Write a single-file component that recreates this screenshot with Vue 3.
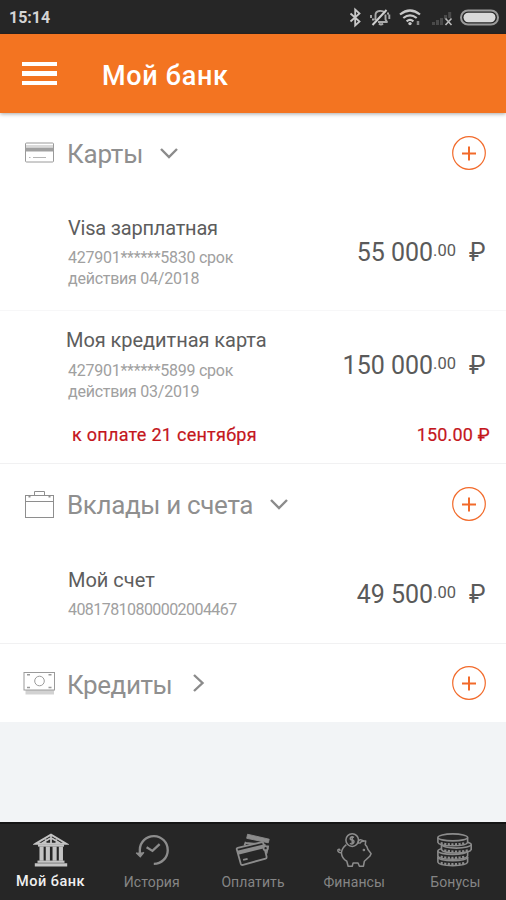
<script setup>
const cards = [
  { title: 'Visa зарплатная', lines: ['427901******5830 срок', 'действия 04/2018'], sum: '55 000', kind: 'visa' },
  { title: 'Моя кредитная карта', lines: ['427901******5899 срок', 'действия 03/2019'], sum: '150 000', kind: 'credit' },
]
</script>

<template>
  <div class="screen">
    <div class="status">
      <span class="time">15:14</span>
      <svg class="status-icons" width="156" height="24" viewBox="346 5 156 24" fill="none">
        <path d="M350.500 13.500l9 8-4.300 4v-16l4.300 4-9 8" stroke="#c9c9c9" stroke-width="1.800" />
        <g stroke="#aaa" stroke-width="1.900" stroke-linejoin="round">
          <path d="M375.500 20v-5q0-3.500 4-4 3.500-.5 5.500 2M385.500 14.500v5l1.500 2.500h-9M379 23.500q2 2 4 0" />
          <path d="M371 15v3M372 19.500h2.500M389.300 14.500v4.500M387 13.500h2" />
          <path d="M372.500 25L386.500 10" stroke="#d0d0d0" stroke-width="2" />
        </g>
        <g stroke="#c8c8c8" stroke-width="2.200">
          <path d="M400 14.500q10-8 20 0M403.300 18q6.700-5.400 13.400 0M406.600 21.300q3.400-2.700 6.800 0" />
        </g>
        <circle cx="410" cy="23.600" r="1.700" fill="#c8c8c8" />
        <path d="M418 21v4" stroke="#888" stroke-width="2.500" />
        <path d="M433.500 25v-3M437.500 25v-5M441.500 25v-7M445.500 19v-4M449.700 18v-6" stroke="#4a4a4a" stroke-width="3" />
        <path d="M445.500 18.500l6 6.500M451.500 18.500l-6 6.500" stroke="#bbb" stroke-width="1.600" />
        <rect x="461" y="10.500" width="37" height="14" rx="7" stroke="#999" stroke-width="2" />
        <rect x="463.500" y="12.700" width="32" height="9.600" rx="4.800" fill="#d8d8d8" />
      </svg>
    </div>

    <header class="bar">
      <div class="burger"><i></i><i></i><i></i></div>
      <h1>Мой банк</h1>
    </header>

    <main>
      <section class="group">
        <div class="head">
          <svg class="ico" width="34" height="34" viewBox="0 0 34 34" fill="none" stroke="#9a9a9a">
            <rect x="3.500" y="7" width="28" height="19" rx="1" />
            <path d="M3.500 13.500h28" stroke-width="4" stroke="#a0a0a0" />
            <path d="M4 10h27M7 21.500h1.500M11 21.500h13" stroke="#b5b5b5" />
          </svg>
          <h2 class="t-cards">Карты</h2>
          <svg class="chev" width="20" height="20" viewBox="0 0 20 20"><path d="M2 6l8 8 8-8" /></svg>
          <button class="add"><svg width="36" height="36" viewBox="0 0 36 36"><circle cx="18" cy="18" r="16.300" /><path d="M11 18.500h14M18 11.500v14" /></svg></button>
        </div>

        <article v-for="c in cards" :key="c.title" class="item" :class="c.kind">
          <div class="row">
            <div class="info">
              <h3>{{ c.title }}</h3>
              <p v-for="l in c.lines" :key="l">{{ l }}</p>
            </div>
            <div class="sum">{{ c.sum }}<sup>.00</sup><b>₽</b></div>
          </div>
          <div v-if="c.kind === 'credit'" class="due">
            <span class="due-date">к оплате 21 сентября</span>
            <span class="due-sum">150.00 ₽</span>
          </div>
        </article>
      </section>

      <section class="group">
        <div class="head">
          <svg class="ico" width="34" height="34" viewBox="0 0 34 34" fill="none" stroke="#8e8e8e">
            <rect x="3.500" y="8.500" width="28" height="22" />
            <path d="M12.500 8V4.500h10V8M3.500 14.500h28" />
            <path d="M7.500 8v2.500M27.500 8v2.500" stroke-width="2" />
          </svg>
          <h2 class="t-dep">Вклады и счета</h2>
          <svg class="chev" width="20" height="20" viewBox="0 0 20 20"><path d="M2 6l8 8 8-8" /></svg>
          <button class="add"><svg width="36" height="36" viewBox="0 0 36 36"><circle cx="18" cy="18" r="16.300" /><path d="M11 18.500h14M18 11.500v14" /></svg></button>
        </div>
        <article class="item account">
          <div class="row">
            <div class="info">
              <h3>Мой счет</h3>
              <p>40817810800002004467</p>
            </div>
            <div class="sum">49 500<sup>.00</sup><b>₽</b></div>
          </div>
        </article>
      </section>

      <section class="group">
        <div class="head head-last">
          <svg class="ico" width="34" height="34" viewBox="0 0 34 34" fill="none" stroke="#9a9a9a">
            <path d="M3.500 26h28.500" stroke="#d2d2d2" stroke-width="5" />
            <rect x="2" y="6.500" width="30.500" height="17.500" fill="#fff" />
            <circle cx="17.500" cy="15" r="4.800" />
            <path d="M5 8.800h3M26.500 8.800h3M5 21.500h3M26.500 21.500h3" stroke-width="1.500" />
          </svg>
          <h2 class="t-cred">Кредиты</h2>
          <svg class="chev" width="20" height="20" viewBox="0 0 20 20"><path d="M6 2l8.500 8L6 18" /></svg>
          <button class="add"><svg width="36" height="36" viewBox="0 0 36 36"><circle cx="18" cy="18" r="16.300" /><path d="M11 18.500h14M18 11.500v14" /></svg></button>
        </div>
      </section>
    </main>

    <nav class="tabs">
      <a class="tab active">
        <svg width="36" height="36" viewBox="0 0 40 40" fill="none" stroke="#c4c4c4">
          <path d="M3 13L20 3 37 13z" stroke-width="2.200" />
          <path d="M10 12.500L20 6.500l10 6M20 4v9M14 8v5M26 8v5" stroke-width="2" />
          <path d="M5.500 15h29" stroke-width="2.500" />
          <path d="M9.500 16v16M16.500 16v16M24 16v16M31 16v16" stroke-width="4.600" />
          <path d="M2 36.500h36" stroke-width="3.500" /><path d="M5 33h30" stroke-width="2.500" />
        </svg>
        <span>Мой банк</span>
      </a>
      <a class="tab">
        <svg width="36" height="36" viewBox="0 0 40 40" fill="none" stroke="#8c8c8c" stroke-width="2.600">
          <path d="M6.500 25V19.500A15.500 15.500 0 1 1 22 35.500" />
          <path d="M2.500 23l4.500 4.500 4-5" fill="#8c8c8c" stroke-width="1.500" />
          <path d="M14 17l6.500 4 8-7.500" />
        </svg>
        <span>История</span>
      </a>
      <a class="tab">
        <svg width="36" height="36" viewBox="0 0 40 40" fill="none" stroke="#8c8c8c" stroke-width="2">
          <path d="M14 2.500l24 5.500-1 4-24-5z" fill="#8c8c8c" stroke-width="1" />
          <path d="M12 11l-1.500 4M37 15l-2 9M12 12l22 2.500" />
          <path d="M2 19.500q-.5-1.500 1-2L29 11.500q2-.5 2.500 1L35 27q.5 2-1 2.500L9 36.500q-2 .5-2.500-1z" fill="#262626" />
          <path d="M3 23l29-7" stroke-width="4.500" />
          <path d="M9 31l5-1.200" />
          <circle cx="34" cy="18" r="2.300" fill="#262626" />
        </svg>
        <span>Оплатить</span>
      </a>
      <a class="tab">
        <svg width="36" height="36" viewBox="0 0 40 40" fill="none" stroke="#8c8c8c" stroke-width="1.700" stroke-linejoin="round">
          <circle cx="18" cy="9" r="7" />
          <path d="M20 6q-3-1.500-4 .5t2 2.500 1.500 3-4 .5M18 4.500v9" />
          <path d="M11.500 14Q6.500 18 6 23q.5 6.500 6 9.500L13.500 38h4.500l1-3.500h5.500l1.500 3.500h4.500l1-5.500 6-5.500L39 24l-3.500-4.500q-1-4-3-5.500l.5-4q-5-.5-7 3" />
          <path d="M25 13q-1-4 2-4.500l4 1.500M6 23q-4 0-4-3 2-2 2.500 1" />
          <circle cx="31" cy="20" r=".6" />
        </svg>
        <span>Финансы</span>
      </a>
      <a class="tab">
        <svg width="36" height="36" viewBox="0 0 40 40" fill="none" stroke="#8c8c8c" stroke-width="1.800">
          <g v-for="s in [[1, 31], [1, 24], [5, 17], [1, 9]]" :key="s[1]" :transform="`translate(${s[0]} ${s[1] - 3})`">
            <path d="M0 0v5.500q1 3.800 16.500 3.800T33 5.500V0" fill="#262626" />
            <ellipse cx="16.500" cy="0" rx="16.500" ry="3.900" fill="#262626" />
            <path d="M3 6.400q13.500 2.800 27 0" stroke-width="2.600" stroke-dasharray="2.400 1.600" />
          </g>
        </svg>
        <span>Бонусы</span>
      </a>
    </nav>
  </div>
</template>

<style>
body { margin: 0; background: #f2f4f6; }
</style>

<style scoped>
.screen {
  display: flex;
  flex-direction: column;
  width: 506px;
  height: 900px;
  overflow: hidden;
  background: #f2f4f6;
  font-family: Roboto, "Liberation Sans", sans-serif;
}
h1, h2, h3, p { margin: 0; font-weight: 400; white-space: nowrap; }
.status {
  display: flex;
  justify-content: space-between;
  box-sizing: border-box;
  height: 34px;
  flex: none;
  padding: 5px 4px 0 9px;
  background: #262626;
  border-bottom: 1px solid #2b2320;
}
.time { color: #d4d4d4; font-size: 16px; font-weight: 700; line-height: 26px; }
.bar {
  display: flex;
  align-items: center;
  box-sizing: border-box;
  height: 79px;
  flex: none;
  padding-left: 22px;
  background: #f37421;
  box-shadow: 0 1px 4px rgba(0, 0, 0, .35);
  z-index: 1;
}
.burger { display: flex; flex-direction: column; gap: 5px; width: 35px; }
.burger i { height: 4.500px; background: #fff; }
h1 { margin: 4px 0 0 45px; color: #fff; font-size: 27px; font-weight: 500; line-height: 32px; letter-spacing: .7px; }
main { flex: 1; }
.group { background: #fff; border-bottom: 1px solid #f1f1f2; }
.group:last-child { border: 0; }
.head { display: flex; align-items: center; height: 79px; padding: 0 20px 0 22px; }
.head-last { height: 78px; }
.head-last .ico, .head-last .add { margin-top: -1px; }
.ico { flex: none; margin-right: 11px; }
h2 { margin-top: 3px; color: #8f8f8f; font-size: 26px; line-height: 32px; }
.t-cards { letter-spacing: -.2px; }
.t-dep { letter-spacing: -.35px; }
.t-cred { letter-spacing: -.4px; }
.chev { margin-left: 16px; fill: none; stroke: #8b8b8b; stroke-width: 2.400; }
.add { display: flex; margin: 0 -1px 0 auto; padding: 0; border: 0; background: none; }
.add svg { fill: none; stroke: #f26a2a; stroke-width: 1.200; }
.add path { stroke-width: 2; }
.item { box-sizing: border-box; }
.row { display: flex; justify-content: space-between; padding: 0 20px 0 68px; }
.visa { height: 119px; padding-top: 24px; border-bottom: 1px solid #f7f7f8; }
.credit { height: 152px; padding-top: 17px; }
.account { height: 100px; padding-top: 25px; }
h3 { margin-bottom: 8px; color: #5d5d5d; font-size: 20px; line-height: 24px; letter-spacing: -.2px; }
.credit h3 { margin: 0 0 9px -2px; letter-spacing: -.05px; }
.account h3 { letter-spacing: 0; }
p { color: #a0a0a0; font-size: 16px; line-height: 20.500px; letter-spacing: -.25px; }
.account p { letter-spacing: -.56px; }
.sum { display: flex; margin-top: 22px; color: #5a5a5a; font-size: 25px; line-height: 30px; white-space: nowrap; }
.credit .sum { margin-top: 23px; }
.account .sum { margin-top: 12px; }
.sum sup { font-size: 16.500px; line-height: 26px; }
.sum b { width: 17px; margin-left: 13px; font-weight: 400; }
.due { display: flex; justify-content: space-between; margin-top: 21px; padding: 0 16px 0 72px; color: #c4161c; font-size: 18px; line-height: 24px; -webkit-text-stroke: .2px #c4161c; }
.due-date { letter-spacing: .28px; }
.due-sum { letter-spacing: .2px; }
</style>

<style scoped>
.tabs {
  display: flex;
  box-sizing: border-box;
  height: 78px;
  flex: none;
  border-top: 2px solid #151515;
  background: #262626;
}
.tab { display: flex; flex: 1; flex-direction: column; align-items: center; padding-top: 8px; color: #858585; font-size: 14px; line-height: 18px; }
.tab span { margin-top: 5px; letter-spacing: .1px; }
.active { color: #f0f0f0; font-weight: 500; }
.active span { font-size: 14.500px; letter-spacing: .5px; }
</style>
